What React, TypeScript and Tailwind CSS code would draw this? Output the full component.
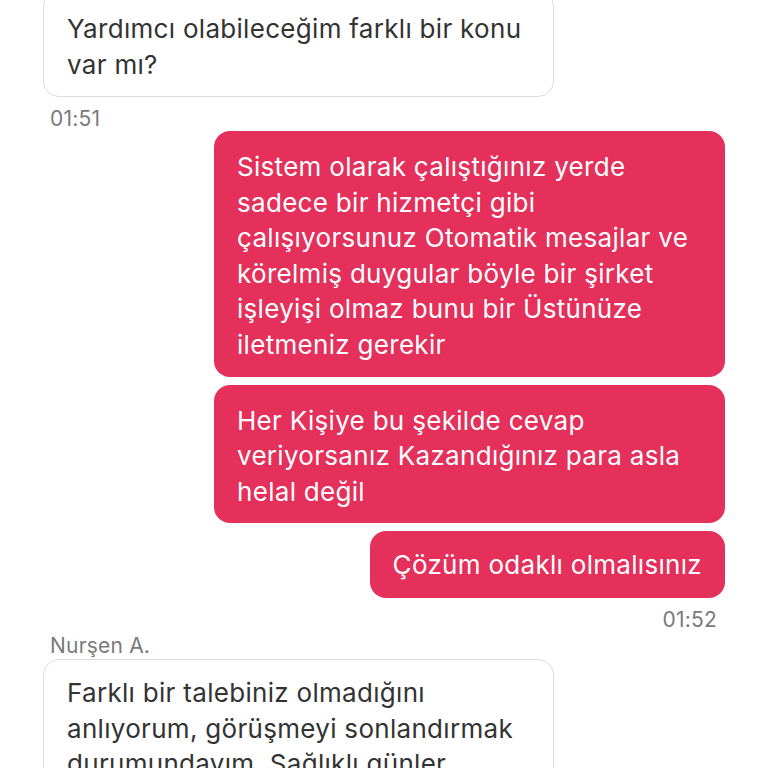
import React from "react";

const font = { fontFamily: 'Inter, "Liberation Sans", Arial, sans-serif' };

function Lines({ lines }: { lines: string[] }) {
  return (
    <>
      {lines.map((l, i) => (
        <div key={i} className="whitespace-nowrap">{l}</div>
      ))}
    </>
  );
}

export default function App() {
  return (
    <div className="w-[768px] h-[768px] overflow-hidden bg-white relative" style={font}>
      <div className="flex flex-col -mt-[10px]">
        {/* incoming bubble */}
        <div className="ml-[43px] w-[511px] rounded-[16px] border border-[#dcdcdc] pl-[23px] pt-[20px] pb-[13px] text-[26px] leading-[36px] tracking-[0.3px] text-[#333333]">
          <Lines lines={["Yardımcı olabileceğim farklı bir konu", "var mı?"]} />
        </div>
        <div className="ml-[50px] mt-[12px] text-[21px] leading-[20px] tracking-[0.2px] text-[#7a7a7a]">01:51</div>

        <div className="flex flex-col items-end mr-[43px] mt-[2px] gap-[8px]">
          <div className="w-[511px] rounded-[16px] bg-[#e4305a] pl-[23px] pt-[18px] pb-[14px] text-[26px] leading-[35.6px] tracking-[0.3px] text-white">
            <Lines
              lines={[
                "Sistem olarak çalıştığınız yerde",
                "sadece bir hizmetçi gibi",
                "çalışıyorsunuz Otomatik mesajlar ve",
                "körelmiş duygular böyle bir şirket",
                "işleyişi olmaz bunu bir Üstünüze",
                "iletmeniz gerekir",
              ]}
            />
          </div>
          <div className="w-[511px] rounded-[16px] bg-[#e4305a] pl-[23px] pt-[18px] pb-[14px] text-[26px] leading-[35.6px] tracking-[0.3px] text-white">
            <Lines
              lines={[
                "Her Kişiye bu şekilde cevap",
                "veriyorsanız Kazandığınız para asla",
                "helal değil",
              ]}
            />
          </div>
          <div className="rounded-[16px] bg-[#e4305a] px-[23px] pt-[16px] pb-[15px] text-[26px] leading-[35.6px] tracking-[0.3px] text-white">
            <Lines lines={["Çözüm odaklı olmalısınız"]} />
          </div>
        </div>
        <div className="self-end mr-[51px] mt-[12px] text-[21px] leading-[20px] tracking-[0.2px] text-[#7a7a7a]">01:52</div>

        <div className="ml-[50px] mt-[6px] text-[21px] leading-[20px] tracking-[0.2px] text-[#7a7a7a]">Nurşen A.</div>
        <div className="ml-[43px] mt-[3px] w-[511px] rounded-[16px] border border-[#dcdcdc] pl-[23px] pt-[15px] pb-[14px] text-[26px] leading-[35.6px] tracking-[0.3px] text-[#333333]">
          <Lines
            lines={[
              "Farklı bir talebiniz olmadığını",
              "anlıyorum, görüşmeyi sonlandırmak",
              "durumundayım. Sağlıklı günler",
              "dilerim.",
            ]}
          />
        </div>
      </div>
    </div>
  );
}
